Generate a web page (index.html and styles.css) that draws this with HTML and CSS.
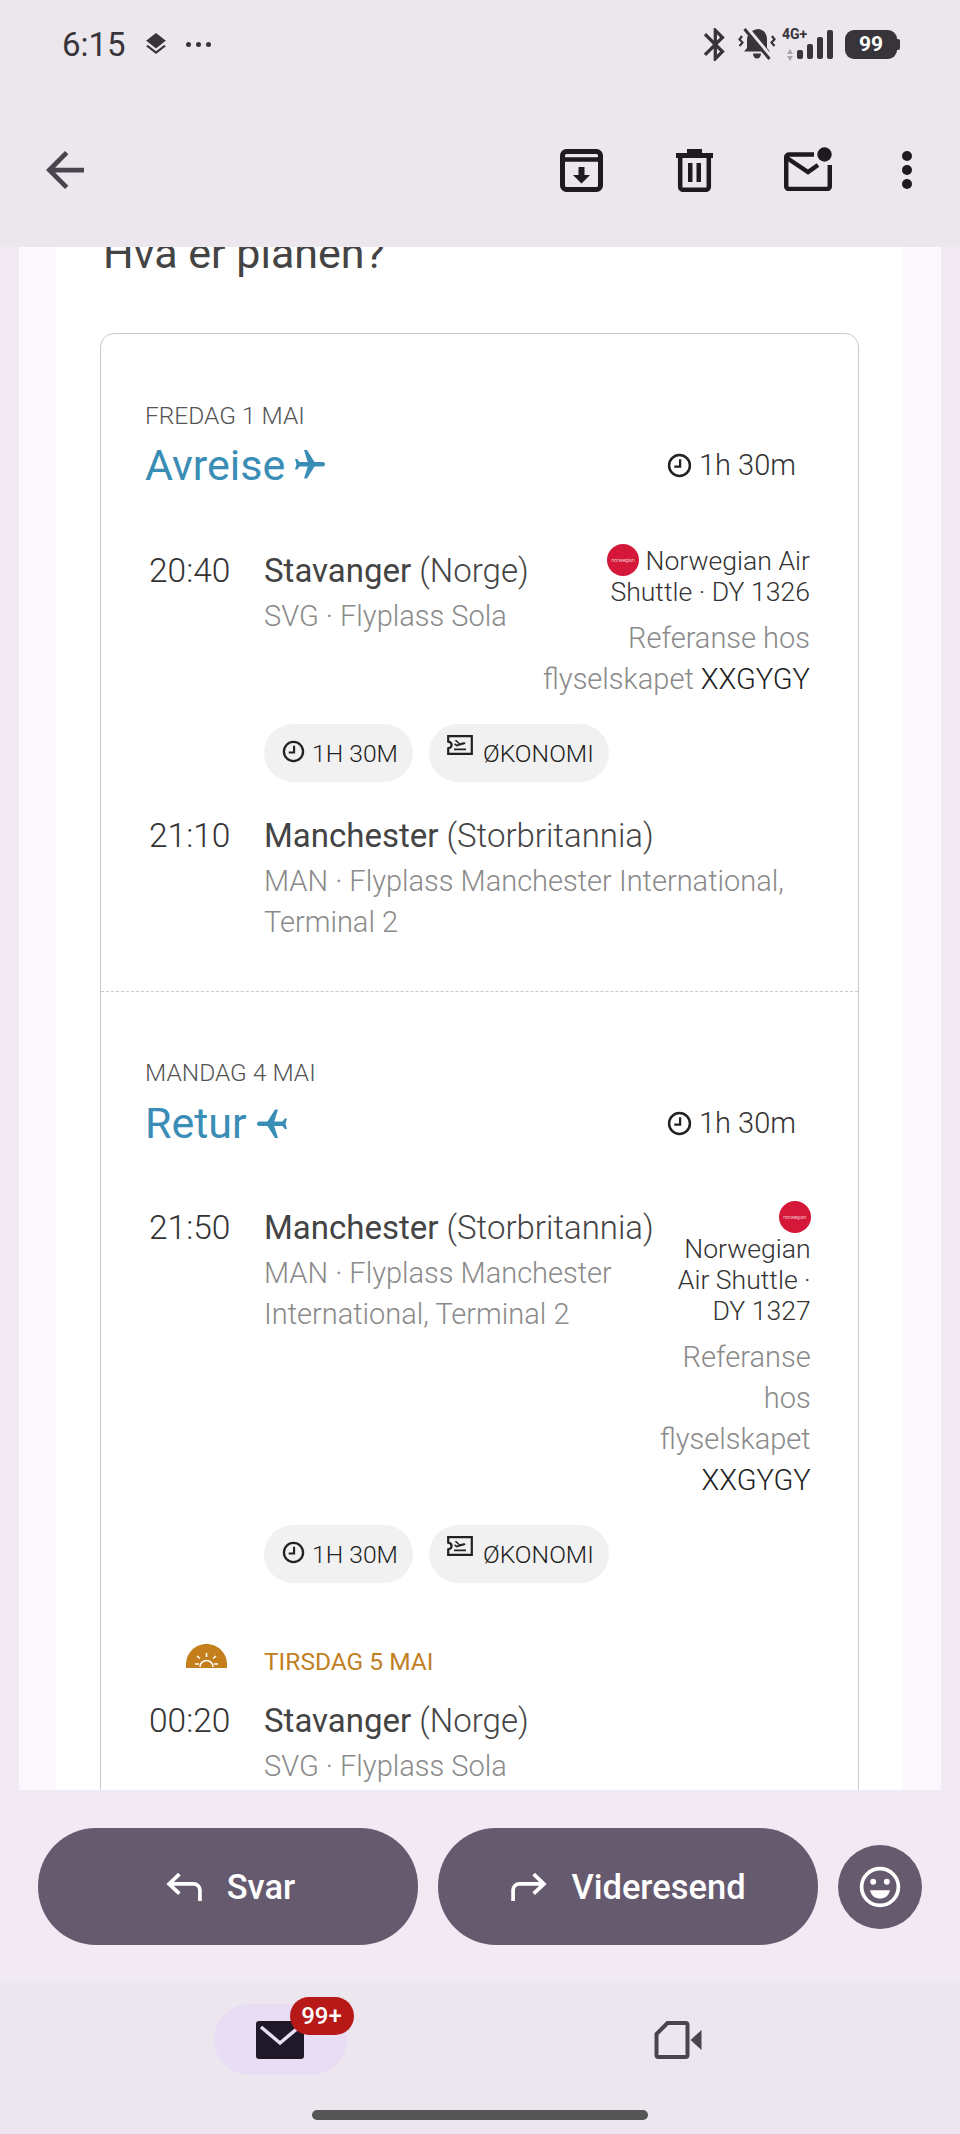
FILE: index.html
```html
<!DOCTYPE html>
<html lang="no">
<head>
  <meta charset="UTF-8" />
  <meta name="viewport" content="width=device-width, initial-scale=1.0"/>
  <title>Hva er planen?</title>
  <link rel="stylesheet" href="styles.css">
</head>
<body>
  <svg class="defs" width="0" height="0">
    <symbol id="clock" viewBox="0 0 24 24">
      <circle cx="12" cy="12" r="10" fill="none" stroke="currentColor" stroke-width="2.4"/>
      <path d="M12.6 6v7H7" fill="none" stroke="currentColor" stroke-width="2.2"/>
    </symbol>
    <symbol id="plane" viewBox="0 0 24 24">
      <path fill="currentColor" d="M21 16v-2l-8-5V3.5c0-.83-.67-1.5-1.5-1.5S10 2.67 10 3.5V9l-8 5v2l8-2.5V19l-2 1.5V22l3.5-1 3.5 1v-1.5L13 19v-5.5l8 2.5z"/>
    </symbol>
    <symbol id="ticket" viewBox="0 0 26 20">
      <path d="M1.2 1.2h23.6v17.6H1.2v-5.4c2.4-.5 3.4-1.8 3.4-3.4S3.600 7.100 1.200 6.600z" fill="none" stroke="currentColor" stroke-width="2.2"/>
      <path fill="currentColor" d="M7.500 5.500l2-.5 3.200 3.200 4-1c1-.2 1.600.2 1.700.8.100.6-.3 1-1 1.200l-8 2.200-2.500-2.500 1.500-.4 1.300 1 2-.6zM7 13.500h12v1.700H7z"/>
    </symbol>
  </svg>

  <header class="top">
    <div class="status">
      <span class="clock-text">6:15</span>
      <svg class="ic-layers" viewBox="2 2 20 20"><path fill="#37343a" d="M11.990 18.540l-7.370-5.730L3 14.070l9 7 9-7-1.630-1.270-7.380 5.740zM12 16l7.360-5.730L21 9l-9-7-9 7 1.630 1.270L12 16z"/></svg>
      <span class="more-dots"><i></i><i></i><i></i></span>
      <span class="status-right">
        <svg class="ic-bt" viewBox="5 2 13 20"><path fill="#37343a" d="M17.710 7.710L12 2h-1v7.590L6.410 5 5 6.410 10.590 12 5 17.590 6.410 19 11 14.410V22h1l5.710-5.710-4.300-4.290 4.300-4.290zM13 5.830l1.880 1.880L13 9.590V5.830zm1.880 10.460L13 18.170v-3.760l1.880 1.880z"/></svg>
        <svg class="ic-bell" viewBox="0 0 38 32">
          <path fill="#37343a" d="M21 1c5 1 8 5 8 10v9l3 3.500H6L9 20v-8c0-6 5-11 12-11zM15 25.500h8c0 3-1.800 5-4 5s-4-2-4-5z"/>
          <path d="M8 0l24 29" stroke="#ece6ed" stroke-width="5.500"/>
          <path d="M6.500 1l25 30" stroke="#37343a" stroke-width="3"/>
          <path d="M4 8L1.500 11.500l3 3-3 3.500M34 8l2.500 3.500-3 3 3 3.500" fill="none" stroke="#37343a" stroke-width="2.200"/>
        </svg>
        <span class="net">
          <span class="net-label">4G+</span>
          <span class="updown"><i class="up"></i><i class="down"></i></span>
        </span>
        <span class="bars"><i class="b1"></i><i class="b2"></i><i class="b3"></i><i class="b4"></i></span>
        <span class="battery">99</span>
      </span>
    </div>
    <div class="toolbar">
      <svg class="ic-back" viewBox="4 4 16 16"><path fill="#49454f" d="M20 11H7.830l5.590-5.590L12 4l-8 8 8 8 1.410-1.410L7.830 13H20v-2z"/></svg>
      <svg class="ic-archive" viewBox="0 0 43 43">
        <rect x="2.500" y="2.500" width="38" height="38" rx="4" fill="none" stroke="#1d1b20" stroke-width="5"/>
        <path d="M2 10.500h39" stroke="#1d1b20" stroke-width="4.500"/>
        <path fill="#1d1b20" d="M18.500 18h6v8h5.500l-8.500 8.500L13 26h5.500z"/>
      </svg>
      <svg class="ic-trash" viewBox="0 0 37 43">
        <path fill="#1d1b20" d="M11 0h15v4h11v5H0V4h11z"/>
        <path d="M4.200 7v31a2.800 2.800 0 0 0 2.800 2.800h23a2.800 2.800 0 0 0 2.800-2.800V7" fill="none" stroke="#1d1b20" stroke-width="4.500"/>
        <path fill="#1d1b20" d="M12 14h4.500v19H12zM20.500 14H25v19h-4.500z"/>
      </svg>
      <svg class="ic-unread" viewBox="0 0 48 44">
        <path d="M30 7.500H5a2.800 2.800 0 0 0-2.800 2.800v28.900a2.800 2.800 0 0 0 2.800 2.800h38a2.800 2.800 0 0 0 2.800-2.800V18" fill="none" stroke="#1d1b20" stroke-width="4.500"/>
        <path d="M3 11l21 14 10-7" fill="none" stroke="#1d1b20" stroke-width="4.500"/>
        <circle cx="40.500" cy="7.500" r="7.200" fill="#1d1b20"/>
      </svg>
      <span class="ic-more"><i></i><i></i><i></i></span>
    </div>
  </header>

  <main class="mail-body">
    <div class="sheet">
      <h2 class="plan-title">Hva er planen?</h2>
      <div class="plan-card">

        <section class="trip trip-out">
          <div class="trip-date">FREDAG 1 MAI</div>
          <div class="trip-head">
            <div class="trip-name">Avreise <svg class="plane-right"><use href="#plane"/></svg></div>
            <div class="trip-time"><svg><use href="#clock"/></svg>1h 30m</div>
          </div>
          <div class="leg">
            <div class="leg-time">20:40</div>
            <div class="leg-place">
              <div class="place-name"><b>Stavanger</b> (Norge)</div>
              <div class="place-sub">SVG · Flyplass Sola</div>
            </div>
            <div class="leg-airline wide">
              <div class="airline"><span class="logo">norwegian</span> Norwegian Air<br>Shuttle · DY 1326</div>
              <div class="ref">Referanse hos<br>flyselskapet <em>XXGYGY</em></div>
            </div>
          </div>
          <div class="chips">
            <span class="chip"><svg class="chip-clock"><use href="#clock"/></svg>1H 30M</span>
            <span class="chip"><svg class="chip-ticket"><use href="#ticket"/></svg>ØKONOMI</span>
          </div>
          <div class="leg leg-end">
            <div class="leg-time">21:10</div>
            <div class="leg-place">
              <div class="place-name"><b>Manchester</b> (Storbritannia)</div>
              <div class="place-sub">MAN · Flyplass Manchester International,<br>Terminal 2</div>
            </div>
          </div>
        </section>

        <section class="trip trip-back">
          <div class="trip-date">MANDAG 4 MAI</div>
          <div class="trip-head">
            <div class="trip-name">Retur <svg class="plane-left"><use href="#plane"/></svg></div>
            <div class="trip-time"><svg><use href="#clock"/></svg>1h 30m</div>
          </div>
          <div class="leg">
            <div class="leg-time">21:50</div>
            <div class="leg-place narrow">
              <div class="place-name"><b>Manchester</b> (Storbritannia)</div>
              <div class="place-sub">MAN · Flyplass Manchester<br>International, Terminal 2</div>
            </div>
            <div class="leg-airline slim">
              <div class="airline"><span class="logo logo-solo">norwegian</span><br>Norwegian<br>Air Shuttle ·<br>DY 1327</div>
              <div class="ref">Referanse<br>hos<br>flyselskapet<br><em>XXGYGY</em></div>
            </div>
          </div>
          <div class="chips">
            <span class="chip"><svg class="chip-clock"><use href="#clock"/></svg>1H 30M</span>
            <span class="chip"><svg class="chip-ticket"><use href="#ticket"/></svg>ØKONOMI</span>
          </div>
          <div class="next-day">
            <div class="sun-col">
              <svg class="ic-sun" viewBox="0 0 41 24">
                <path fill="#c47f1c" d="M0 24v-3.500C0 9 9 0 20.500 0S41 9 41 20.500V24z"/>
                <path d="M14 23a6.500 6.500 0 0 1 13 0M9 20h4M28 20h4M20.500 9v4M11 12l3 2.500M30 12l-3 2.500" fill="none" stroke="#fff" stroke-width="1.500"/>
              </svg>
            </div>
            <div class="next-date">TIRSDAG 5 MAI</div>
          </div>
          <div class="leg leg-next">
            <div class="leg-time">00:20</div>
            <div class="leg-place">
              <div class="place-name"><b>Stavanger</b> (Norge)</div>
              <div class="place-sub">SVG · Flyplass Sola</div>
            </div>
          </div>
        </section>

      </div>
    </div>
  </main>

  <div class="reply-bar">
    <button class="reply-btn reply-short">
      <svg viewBox="0 0 36 28"><path d="M13 2L3 11.500l10 9.500M3 11.500h24a6 6 0 0 1 6 6V28" fill="none" stroke="#fff" stroke-width="3.600"/></svg>
      Svar
    </button>
    <button class="reply-btn">
      <svg viewBox="0 0 36 28"><path d="M23 2l10 9.500L23 21M33 11.500H9a6 6 0 0 0-6 6V28" fill="none" stroke="#fff" stroke-width="3.600"/></svg>
      Videresend
    </button>
    <button class="emoji-btn">
      <svg viewBox="0 0 40 40">
        <circle cx="20" cy="20" r="17.500" fill="none" stroke="#fff" stroke-width="3.500"/>
        <circle cx="13.500" cy="15" r="2.800" fill="#fff"/>
        <circle cx="26.500" cy="15" r="2.800" fill="#fff"/>
        <path fill="#fff" d="M10.500 23h19c-1 5-5 8-9.500 8s-8.500-3-9.500-8z"/>
      </svg>
    </button>
  </div>

  <nav class="bottom-nav">
    <div class="nav-items">
      <div class="nav-item">
        <div class="nav-pill">
          <svg class="ic-mail" viewBox="0 0 48 38">
            <rect width="48" height="38" rx="3" fill="#1f1829"/>
            <path d="M5 6l19 16L43 6" fill="none" stroke="#e9ddf5" stroke-width="3.500"/>
          </svg>
          <span class="badge">99+</span>
        </div>
      </div>
      <div class="nav-item">
        <svg class="ic-meet" viewBox="0 0 47 38">
          <path d="M13 2h18a2 2 0 0 1 2 2v30a2 2 0 0 1-2 2H4a2 2 0 0 1-2-2V13z" fill="none" stroke="#49454f" stroke-width="4"/>
          <path fill="#49454f" d="M36 19L47 9v20z"/>
        </svg>
      </div>
    </div>
    <div class="home-bar"></div>
  </nav>
</body>
</html>
```
FILE: styles.css
```css
* {
  box-sizing: border-box;
}

body {
  margin: 0;
  width: 960px;
  height: 2134px;
  display: flex;
  flex-direction: column;
  overflow: hidden;
  background: #f1e9f4;
  font-family: Roboto, sans-serif;
  color: #444;
}

.defs {
  display: block;
}

/* top bars */
.top {
  height: 247px;
  background: #ece6ed;
  flex-shrink: 0;
}

.status {
  height: 88px;
  padding: 0 61px 0 62px;
  display: flex;
  align-items: center;
  color: #37343a;
}

.clock-text {
  font-size: 33px;
  width: 65px;
}

.ic-layers {
  width: 22px;
  height: 22px;
  margin-left: 18px;
}

.more-dots {
  display: flex;
  gap: 5px;
  margin-left: 19px;
}

.more-dots i {
  width: 5px;
  height: 5px;
  border-radius: 50%;
  background: #37343a;
}

.status-right {
  margin-left: auto;
  display: flex;
  align-items: center;
}

.ic-bt {
  width: 23px;
  height: 33px;
}

.ic-bell {
  width: 38px;
  height: 32px;
  margin-left: 12px;
}

.net {
  width: 30px;
  height: 33px;
  margin-left: 6px;
  display: flex;
  flex-direction: column;
  align-items: flex-start;
}

.net-label {
  font-size: 14px;
  line-height: 13px;
  font-weight: 700;
}

.updown {
  margin: 8px 0 0 5px;
  display: flex;
  flex-direction: column;
  gap: 2px;
}

.updown i {
  width: 0;
  height: 0;
  border-left: 3.500px solid transparent;
  border-right: 3.500px solid transparent;
}

.updown .up {
  border-bottom: 5px solid #a9a5ab;
}

.updown .down {
  border-top: 5px solid #a9a5ab;
}

.bars {
  display: flex;
  align-items: flex-end;
  gap: 4px;
  height: 29px;
  margin-left: -15px;
}

.bars i {
  width: 6px;
  background: #37343a;
  border-radius: 2px;
}

.b1 { height: 9px; }
.b2 { height: 15px; }
.b3 { height: 22px; }
.b4 { height: 29px; }

.battery {
  width: 52px;
  height: 29px;
  margin-left: 12px;
  margin-right: 2px;
  background: #37343a;
  border-radius: 9px;
  color: #fff;
  font-size: 21px;
  font-weight: 700;
  line-height: 29px;
  text-align: center;
  position: relative;
}

.battery::after {
  content: '';
  position: absolute;
  right: -3px;
  top: 9px;
  width: 3px;
  height: 11px;
  background: #37343a;
  border-radius: 0 2px 2px 0;
}

.toolbar {
  height: 44px;
  margin-top: 60px;
  padding-left: 46px;
  display: flex;
  align-items: center;
}

.ic-back {
  width: 38px;
  height: 38px;
  margin-right: 476px;
}

.ic-archive {
  width: 43px;
  height: 43px;
  margin-right: 73px;
}

.ic-trash {
  width: 37px;
  height: 43px;
  margin-right: 71px;
}

.ic-unread {
  width: 48px;
  height: 44px;
  margin-top: -3px;
  margin-right: 70px;
}

.ic-more {
  display: flex;
  flex-direction: column;
  gap: 4px;
}

.ic-more i {
  width: 10px;
  height: 10px;
  border-radius: 50%;
  background: #1d1b20;
}

/* mail body */
.mail-body {
  height: 1543px;
  margin: 0 19px;
  padding: 0 38px 0 37px;
  background: #fdf7fe;
  overflow: hidden;
  flex-shrink: 0;
}

.sheet {
  margin-top: -19px;
  padding: 0 44px;
  background: #fff;
  height: 1600px;
}

.plan-title {
  margin: 0;
  padding-left: 3px;
  font-size: 43px;
  line-height: 50px;
  font-weight: 400;
  color: #444;
}

.plan-card {
  margin-top: 55px;
  border: 1px solid #c9c9c9;
  border-radius: 14px;
  height: 1600px;
}

.trip {
  padding: 0 48px 0 44px;
}

.trip-out {
  padding-top: 68px;
  padding-bottom: 48px;
  border-bottom: 1px dashed #c9c9c9;
}

.trip-back {
  padding-top: 67px;
}

.trip-date {
  font-size: 24.500px;
  line-height: 28px;
  font-weight: 300;
  color: #555;
}

.trip-head {
  display: flex;
  justify-content: space-between;
  align-items: center;
  margin-top: 10px;
  height: 50px;
  padding-right: 14px;
}

.trip-back .trip-head {
  margin-top: 11px;
}

.trip-name {
  font-size: 43px;
  color: #3a8db5;
  display: flex;
  align-items: center;
  gap: 7px;
}

.trip-name svg {
  width: 36px;
  height: 36px;
  color: #3a8db5;
}

.plane-right {
  transform: rotate(90deg);
}

.plane-left {
  transform: rotate(-90deg);
}

.trip-time {
  font-size: 29px;
  font-weight: 300;
  color: #333;
  display: flex;
  align-items: center;
  gap: 7px;
}

.trip-time svg {
  width: 25px;
  height: 25px;
  color: #222;
}

.leg {
  display: flex;
  margin-top: 61px;
}

.trip-back .leg {
  margin-top: 60px;
}

.leg-time {
  width: 119px;
  padding-left: 4px;
  font-size: 33.500px;
  line-height: 40px;
  font-weight: 300;
  color: #333;
  flex-shrink: 0;
}

.leg-place {
  flex: 1;
}

.leg-place.narrow {
  flex: none;
  width: 396px;
}

.place-name {
  font-size: 33px;
  line-height: 40px;
  font-weight: 300;
  color: #444;
  white-space: nowrap;
}

.place-name b {
  font-weight: 400;
}

.place-sub {
  margin-top: 5px;
  font-size: 29px;
  line-height: 41px;
  font-weight: 300;
  color: #8a8a8a;
  white-space: nowrap;
}

.leg-airline {
  margin-top: -7px;
  text-align: right;
  white-space: nowrap;
  flex-shrink: 0;
  margin-left: auto;
}

.airline {
  font-size: 26.600px;
  line-height: 31px;
  font-weight: 300;
  color: #333;
}

.logo {
  display: inline-block;
  width: 32px;
  height: 32px;
  border-radius: 50%;
  background: #d5173a;
  color: #fff;
  font-size: 5px;
  line-height: 32px;
  text-align: center;
  vertical-align: -6px;
  overflow: hidden;
}

.ref {
  margin-top: 11px;
  font-size: 29px;
  line-height: 41px;
  font-weight: 300;
  color: #8a8a8a;
}

.ref em {
  font-style: normal;
  font-weight: 300;
  color: #222;
}

.chips {
  display: flex;
  gap: 16px;
  margin: 24px 0 0 119px;
}

.chip {
  height: 58px;
  padding: 0 15px 0 18px;
  display: flex;
  align-items: center;
  background: #f1f1f1;
  border-radius: 29px;
  font-size: 24.700px;
  font-weight: 300;
  color: #222;
}

.chip-clock {
  width: 23px;
  height: 23px;
  margin-right: 7px;
  margin-top: -4px;
}

.chip-ticket {
  width: 26px;
  height: 20px;
  margin-right: 10px;
  margin-top: -16px;
}

.trip .leg-end {
  margin-top: 34px;
}

.next-day {
  display: flex;
  margin-top: 65px;
}

.sun-col {
  width: 119px;
  padding-left: 41px;
}

.ic-sun {
  display: block;
  width: 41px;
  height: 24px;
  margin-top: -4px;
}

.next-date {
  font-size: 24.500px;
  line-height: 28px;
  color: #c28024;
}

.trip .leg-next {
  margin-top: 25px;
}

/* reply actions */
.reply-bar {
  height: 193px;
  padding-left: 38px;
  display: flex;
  align-items: center;
  gap: 20px;
  background: #f1e9f4;
  flex-shrink: 0;
}

.reply-btn {
  width: 380px;
  height: 117px;
  padding: 0;
  border: none;
  border-radius: 58px;
  background: #665a6f;
  color: #fff;
  font-family: Roboto, sans-serif;
  font-size: 34.500px;
  font-weight: 500;
  display: flex;
  align-items: center;
  justify-content: center;
  gap: 24px;
}

.reply-short {
  padding-left: 5px;
}

.reply-btn svg {
  width: 37px;
  height: 29px;
}

.emoji-btn {
  width: 84px;
  height: 84px;
  padding: 0;
  border: none;
  border-radius: 50%;
  background: #665a6f;
  display: flex;
  align-items: center;
  justify-content: center;
}

.emoji-btn svg {
  width: 42px;
  height: 42px;
}

/* bottom navigation */
.bottom-nav {
  height: 151px;
  background: #ece6ee;
  flex-shrink: 0;
  padding-top: 21px;
}

.nav-items {
  display: grid;
  grid-template-columns: 398px 398px;
  padding-left: 81px;
  height: 71px;
}

.nav-item {
  display: flex;
  align-items: center;
  justify-content: center;
}

.nav-pill {
  width: 133px;
  height: 71px;
  border-radius: 36px;
  background: #e9ddf5;
  display: flex;
  align-items: center;
  justify-content: center;
  position: relative;
}

.ic-mail,
.ic-meet {
  width: 48px;
  height: 38px;
}

.badge {
  position: absolute;
  left: 76px;
  top: -7px;
  width: 64px;
  height: 38px;
  border-radius: 19px;
  background: #b71818;
  color: #fff;
  font-size: 24px;
  font-weight: 500;
  line-height: 38px;
  text-align: center;
}

.home-bar {
  width: 336px;
  height: 10px;
  margin: 35px auto 0;
  border-radius: 5px;
  background: #555;
}
```
